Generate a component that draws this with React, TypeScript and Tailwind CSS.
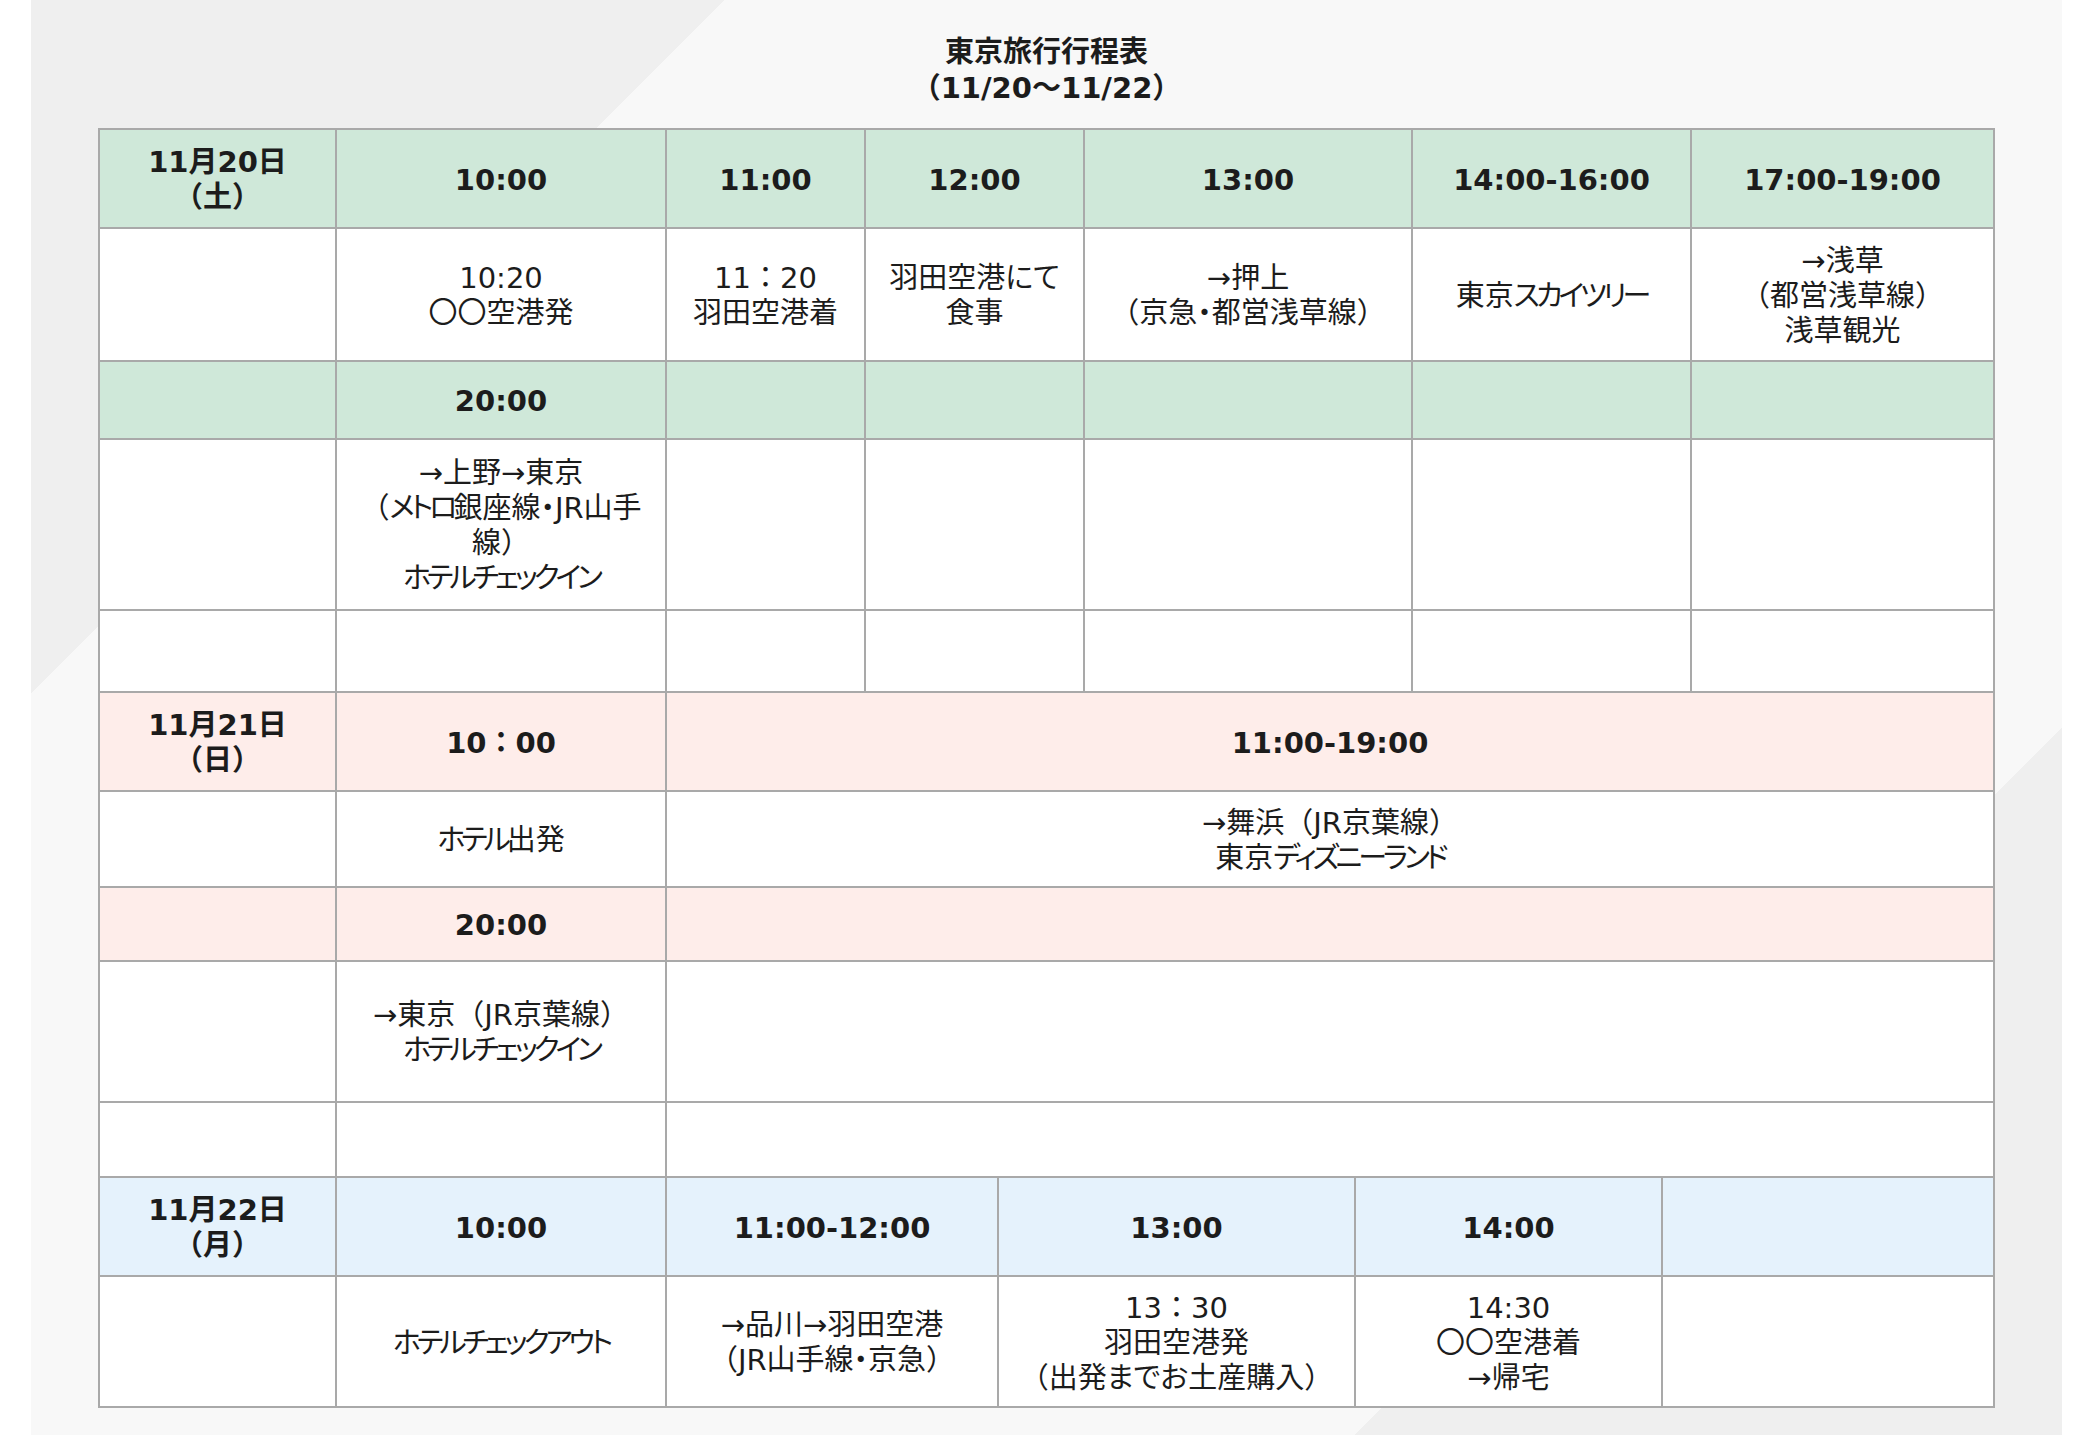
import type { ReactNode } from "react";

type Tone = "green" | "pink" | "blue" | "white";

const toneClass: Record<Tone, string> = {
  green: "bg-[#cfe8d9]",
  pink: "bg-[#feedea]",
  blue: "bg-[#e5f2fc]",
  white: "bg-white",
};

// Fullwidth brackets/colons keep their full em (no palt), katakana runs get squeezed
// a little so the lines read like the narrow UI font of the original sheet.
function fmt(text: string): ReactNode[] {
  return text.split(/([（）：～]|[ァ-ヶー]+)/).map((part, i) => {
    if (!part) return null;
    if (/^[（）：～]$/.test(part))
      return (
        <span key={i} className="[font-feature-settings:normal]">
          {part}
        </span>
      );
    if (/^[ァ-ヶー]+$/.test(part))
      return (
        <span key={i} className="tracking-[-4px]">
          {part}
        </span>
      );
    return part;
  });
}

function Cell({
  tone = "white",
  bold = false,
  lines = [],
}: {
  tone?: Tone;
  bold?: boolean;
  lines?: string[];
}) {
  return (
    <div
      className={`flex items-center justify-center pt-[3px] text-center leading-[35px] ${toneClass[tone]} ${
        bold ? "font-bold" : "font-normal"
      }`}
    >
      <div>
        {lines.map((l, i) => (
          <div key={i}>{fmt(l)}</div>
        ))}
      </div>
    </div>
  );
}

const empty = (n: number, tone: Tone = "white") =>
  Array.from({ length: n }, (_, i) => <Cell key={`e${tone}${i}`} tone={tone} />);

export default function App() {
  return (
    <div className="h-[1435px] bg-white px-[31px] font-['DejaVu_Sans','Noto_Sans_CJK_JP',sans-serif] text-[29px] text-[#1c1c1c] [font-feature-settings:'palt']">
      <div className="h-full bg-[linear-gradient(135deg,#efefef_20%,#f8f8f8_20%,#f8f8f8_79.6%,#efefef_79.6%)] pt-[34px]">
        {/* Title */}
        <div className="mx-auto mb-[22px] w-[1897px] text-center font-bold leading-[36px]">
          <div>東京旅行行程表</div>
          <div>{fmt("（11/20～11/22）")}</div>
        </div>

        <div className="mx-auto w-[1897px]">
          {/* Day 1 */}
          <div className="grid grid-cols-[235px_328px_197px_217px_326px_277px_301px] grid-rows-[97px_131px_76px_169px_80px] gap-[2px] bg-[#a9a9a9] p-[2px]">
            <Cell tone="green" bold lines={["11月20日", "（土）"]} />
            <Cell tone="green" bold lines={["10:00"]} />
            <Cell tone="green" bold lines={["11:00"]} />
            <Cell tone="green" bold lines={["12:00"]} />
            <Cell tone="green" bold lines={["13:00"]} />
            <Cell tone="green" bold lines={["14:00-16:00"]} />
            <Cell tone="green" bold lines={["17:00-19:00"]} />

            <Cell />
            <Cell lines={["10:20", "〇〇空港発"]} />
            <Cell lines={["11：20", "羽田空港着"]} />
            <Cell lines={["羽田空港にて", "食事"]} />
            <Cell lines={["→押上", "（京急・都営浅草線）"]} />
            <Cell lines={["東京スカイツリー"]} />
            <Cell lines={["→浅草", "（都営浅草線）", "浅草観光"]} />

            <Cell tone="green" />
            <Cell tone="green" bold lines={["20:00"]} />
            {empty(5, "green")}

            <Cell />
            <Cell
              lines={["→上野→東京", "（メトロ銀座線・JR山手", "線）", "ホテルチェックイン"]}
            />
            {empty(5)}

            {empty(7)}
          </div>

          {/* Day 2 */}
          <div className="grid grid-cols-[235px_328px_1326px] grid-rows-[97px_94px_72px_139px_73px] gap-[2px] bg-[#a9a9a9] px-[2px] pb-[2px]">
            <Cell tone="pink" bold lines={["11月21日", "（日）"]} />
            <Cell tone="pink" bold lines={["10：00"]} />
            <Cell tone="pink" bold lines={["11:00-19:00"]} />

            <Cell />
            <Cell lines={["ホテル出発"]} />
            <Cell lines={["→舞浜（JR京葉線）", "東京ディズニーランド"]} />

            <Cell tone="pink" />
            <Cell tone="pink" bold lines={["20:00"]} />
            <Cell tone="pink" />

            <Cell />
            <Cell lines={["→東京（JR京葉線）", "ホテルチェックイン"]} />
            <Cell />

            {empty(3)}
          </div>

          {/* Day 3 */}
          <div className="grid grid-cols-[235px_328px_330px_355px_305px_330px] grid-rows-[97px_129px] gap-[2px] bg-[#a9a9a9] px-[2px] pb-[2px]">
            <Cell tone="blue" bold lines={["11月22日", "（月）"]} />
            <Cell tone="blue" bold lines={["10:00"]} />
            <Cell tone="blue" bold lines={["11:00-12:00"]} />
            <Cell tone="blue" bold lines={["13:00"]} />
            <Cell tone="blue" bold lines={["14:00"]} />
            <Cell tone="blue" />

            <Cell />
            <Cell lines={["ホテルチェックアウト"]} />
            <Cell lines={["→品川→羽田空港", "（JR山手線・京急）"]} />
            <Cell lines={["13：30", "羽田空港発", "（出発までお土産購入）"]} />
            <Cell lines={["14:30", "〇〇空港着", "→帰宅"]} />
            <Cell />
          </div>
        </div>
      </div>
    </div>
  );
}
